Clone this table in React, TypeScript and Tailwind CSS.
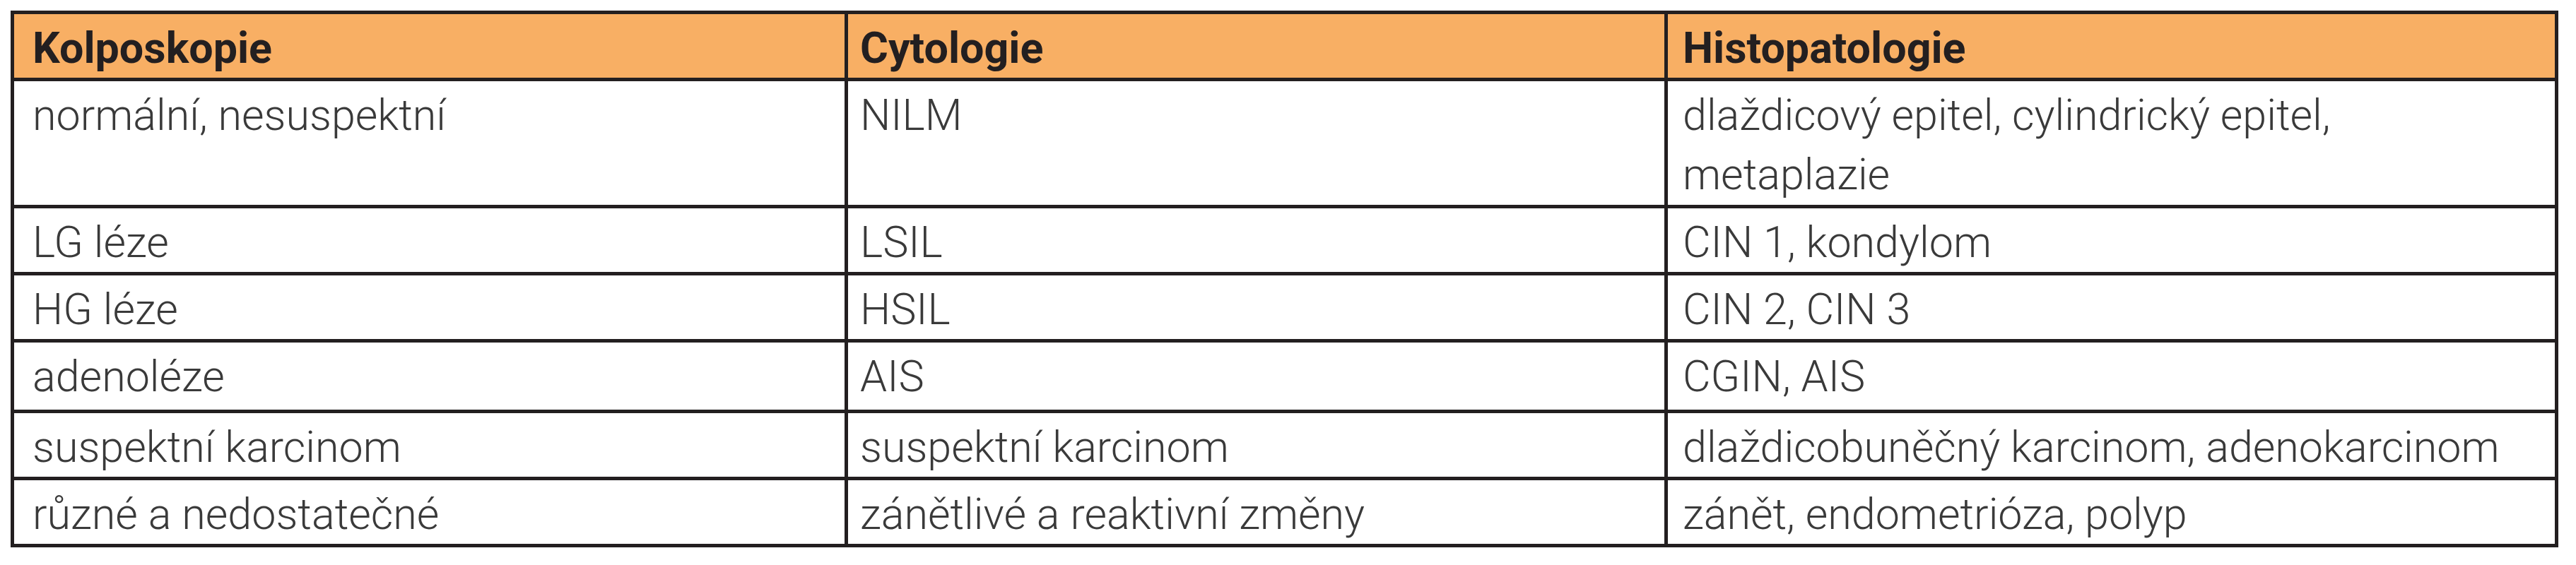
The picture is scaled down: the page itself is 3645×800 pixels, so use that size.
import React from "react";

const rows: [string, string, string][] = [
  ["normální, nesuspektní", "NILM", "dlaždicový epitel, cylindrický epitel, metaplazie"],
  ["LG léze", "LSIL", "CIN 1, kondylom"],
  ["HG léze", "HSIL", "CIN 2, CIN 3"],
  ["adenoléze", "AIS", "CGIN, AIS"],
  ["suspektní karcinom", "suspektní karcinom", "dlaždicobuněčný karcinom, adenokarcinom"],
  ["různé a nedostatečné", "zánětlivé a reaktivní změny", "zánět, endometrióza, polyp"],
];

const pads = ["pl-[26px]", "pl-[17px]", "pl-[21px]"];

export default function App() {
  return (
    <div className="w-[3645px] h-[800px] bg-white pt-[15px] pl-[15px] font-['Roboto',sans-serif]">
      <div className="grid w-[3605px] grid-cols-[1180px_1160px_1260px] grid-rows-[95px_180px_95px_95px_100px_95px_95px] border-l-[5px] border-t-[5px] border-[#231f20]">
        {["Kolposkopie", "Cytologie", "Histopatologie"].map((h, i) => (
          <div
            key={h}
            className={`bg-[#f8af64] border-r-[5px] border-b-[5px] border-[#231f20] ${pads[i]} pt-[6px] pr-[20px] text-[61px] leading-[84px] font-bold text-[#231f20]`}
          >
            {h}
          </div>
        ))}
        {rows.map((r, ri) =>
          r.map((c, ci) => (
            <div
              key={`${ri}-${ci}`}
              className={`bg-white border-r-[5px] border-b-[5px] border-[#231f20] ${pads[ci]} pt-[6px] pr-[40px] text-[61px] leading-[84px] font-light text-[#3a3a3a]`}
            >
              {c}
            </div>
          ))
        )}
      </div>
    </div>
  );
}
